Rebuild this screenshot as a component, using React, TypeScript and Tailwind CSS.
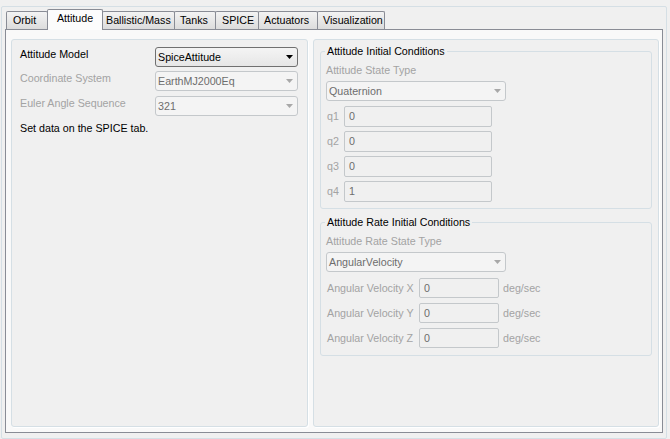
import React from "react";

const Arrow = ({ enabled }: { enabled: boolean }) => (
  <svg width="7" height="4" viewBox="0 0 7 4" className="shrink-0">
    <path d="M0 0H7L3.5 4Z" fill={enabled ? "#000000" : "#a8a8a8"} />
  </svg>
);

const Combo = ({ value, enabled, w }: { value: string; enabled: boolean; w: string }) => (
  <div
    className={
      "h-[20px] flex items-center justify-between rounded-[3px] border pl-[2px] pr-[4px] " +
      w +
      (enabled
        ? " border-[#707070] bg-linear-to-b from-[#f4f4f4] to-[#e6e6e6] text-black"
        : " border-[#c4c8cb] bg-[#f4f4f4] text-[#6d6d6d]")
    }
  >
    <span className="whitespace-nowrap">{value}</span>
    <Arrow enabled={enabled} />
  </div>
);

const Field = ({ value, w, h }: { value: string; w: string; h: string }) => (
  <div
    className={
      "flex items-center rounded-[2px] border border-[#c4c8cb] bg-[#f0f0f0] pl-[4px] text-[#6d6d6d] " + w + " " + h
    }
  >
    {value}
  </div>
);

const tabs = [
  { label: "Orbit", w: "w-[42px] pl-[6px]" },
  { label: "Attitude", w: "w-[56px]", active: true },
  { label: "Ballistic/Mass", w: "w-[73px] pl-[3px]" },
  { label: "Tanks", w: "w-[42px] pl-[5px]" },
  { label: "SPICE", w: "w-[44px] pl-[6px]" },
  { label: "Actuators", w: "w-[60px] pl-[5px]" },
  { label: "Visualization", w: "w-[68px] pl-[5px]" },
];

export default function App() {
  return (
    <div className="w-[670px] h-[439px] bg-[#f0f0f0] pt-[6px] pl-[1px] font-['Liberation_Sans',Arial,sans-serif] text-[10.7px] leading-[13px] text-black overflow-hidden">
      <div className="w-[666px] h-[433px] border border-[#d5dfe5] rounded-[2px] pl-[3px] pt-[2px]">
        <div className="w-[658px]">
          {/* tab strip */}
          <div className="flex h-[20px] items-end pl-[1px]">
            {tabs.map((t, i) =>
              t.active ? (
                <div
                  key={t.label}
                  className={
                    "relative z-10 -ml-px -mb-px h-[21px] border border-b-0 border-[#898c95] bg-[#fcfcfc] pt-[2px] text-center whitespace-nowrap rounded-t-[2px] " +
                    t.w
                  }
                >
                  {t.label}
                </div>
              ) : (
                <div
                  key={t.label}
                  className={
                    "h-[18px] border border-b-0 border-[#898c95] bg-linear-to-b from-[#f3f3f3] to-[#dcdcdc] pt-[2px] whitespace-nowrap rounded-t-[2px] " +
                    (i === 0 ? "" : "-ml-px ") +
                    t.w
                  }
                >
                  {t.label}
                </div>
              )
            )}
          </div>
          {/* tab pane */}
          <div className="h-[404px] border border-[#898c95] bg-[#f9f9f9] flex pl-[5px] pt-[9px] gap-[5px]">
            {/* left panel */}
            <div className="w-[297px] h-[388px] border border-[#d5dfe5] rounded-[3px] bg-[#f0f0f0] shadow-[1px_1px_0_#ffffff] pl-[8px] pt-[7px]">
              <div className="flex">
                <div className="w-[135px] pt-[1px]">Attitude Model</div>
                <Combo value="SpiceAttitude" enabled w="w-[143px]" />
              </div>
              <div className="flex mt-[4px]">
                <div className="w-[135px] pt-[1px] text-[#a3a3a3]">Coordinate System</div>
                <Combo value="EarthMJ2000Eq" enabled={false} w="w-[143px]" />
              </div>
              <div className="flex mt-[5px]">
                <div className="w-[135px] pt-[1px] text-[#a3a3a3]">Euler Angle Sequence</div>
                <Combo value="321" enabled={false} w="w-[143px]" />
              </div>
              <div className="mt-[6px]">Set data on the SPICE tab.</div>
            </div>
            {/* right panel */}
            <div className="w-[346px] h-[388px] border border-[#d5dfe5] rounded-[3px] bg-[#f0f0f0] shadow-[1px_1px_0_#ffffff] px-[6px]">
              <fieldset className="mt-[5px] w-[332px] border border-[#d5dfe5] rounded-[3px] px-[5px] pb-[6px]">
                <legend className="-ml-px px-[2px]">Attitude Initial Conditions</legend>
                <div className="mt-[6px] text-[#a3a3a3]">Attitude State Type</div>
                <div className="mt-[4px]">
                  <Combo value="Quaternion" enabled={false} w="w-[180px]" />
                </div>
                <div className="mt-[5px] flex flex-col gap-[4px]">
                  {["0", "0", "0", "1"].map((v, i) => (
                    <div key={i} className="flex items-center">
                      <div className="w-[18px] pl-[1px] text-[#a3a3a3]">q{i + 1}</div>
                      <Field value={v} w="w-[148px]" h="h-[21px]" />
                    </div>
                  ))}
                </div>
              </fieldset>
              <fieldset className="mt-[7px] w-[332px] border border-[#d5dfe5] rounded-[3px] px-[5px] pb-[7px]">
                <legend className="-ml-px px-[2px]">Attitude Rate Initial Conditions</legend>
                <div className="mt-[6px] text-[#a3a3a3]">Attitude Rate State Type</div>
                <div className="mt-[4px]">
                  <Combo value="AngularVelocity" enabled={false} w="w-[180px]" />
                </div>
                <div className="mt-[6px] flex flex-col gap-[5px]">
                  {["X", "Y", "Z"].map((a) => (
                    <div key={a} className="flex items-center">
                      <div className="w-[93px] pl-[1px] text-[#a3a3a3] whitespace-nowrap">Angular Velocity {a}</div>
                      <Field value="0" w="w-[80px]" h="h-[20px]" />
                      <div className="ml-[4px] text-[#a3a3a3]">deg/sec</div>
                    </div>
                  ))}
                </div>
              </fieldset>
            </div>
          </div>
        </div>
      </div>
    </div>
  );
}
